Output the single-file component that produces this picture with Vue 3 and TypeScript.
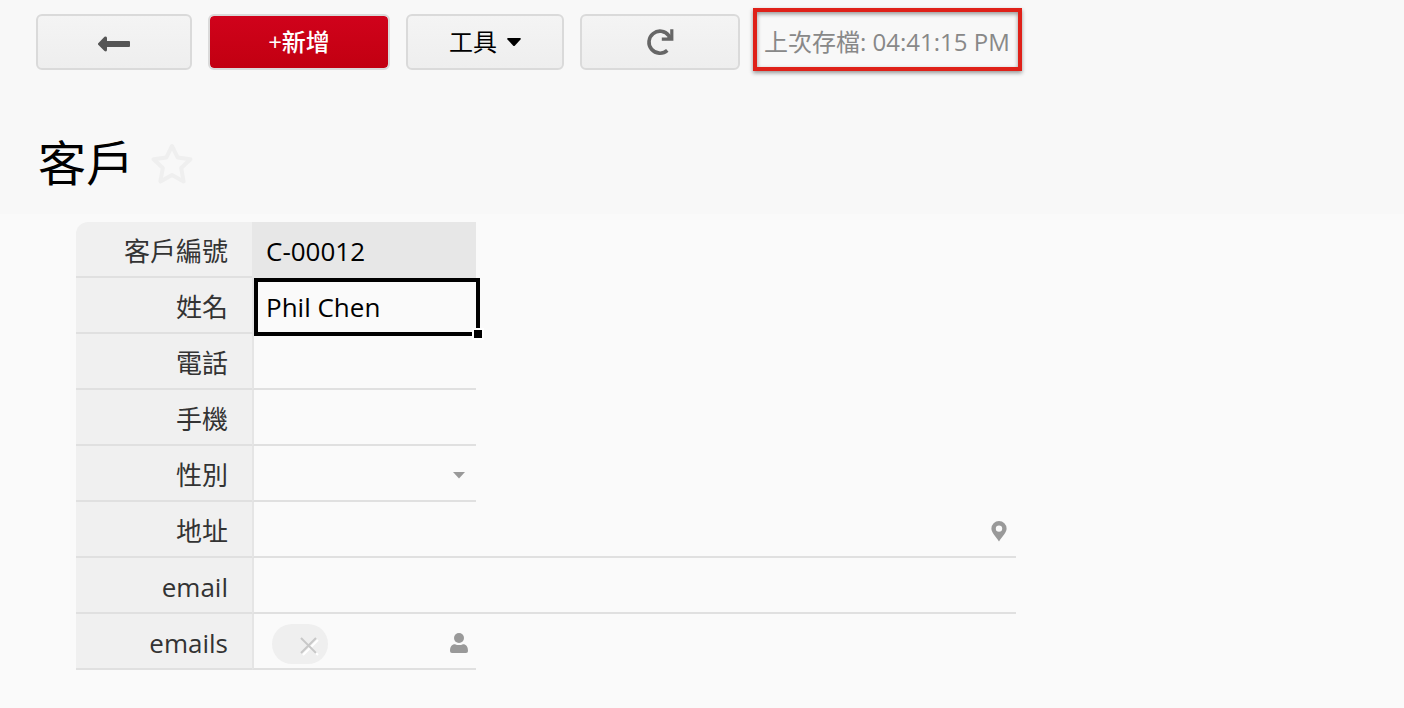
<script setup lang="ts">
import { ref } from 'vue'

interface Field {
  id: string
  label: string
  value: string
  kind: 'locked' | 'text' | 'select' | 'place' | 'people'
  wide?: boolean
  active?: boolean
}

const fields = ref<Field[]>([
  { id: 'number', label: '客戶編號', value: 'C-00012', kind: 'locked' },
  { id: 'name', label: '姓名', value: 'Phil Chen', kind: 'text', active: true },
  { id: 'phone', label: '電話', value: '', kind: 'text' },
  { id: 'mobile', label: '手機', value: '', kind: 'text' },
  { id: 'gender', label: '性別', value: '', kind: 'select' },
  { id: 'address', label: '地址', value: '', kind: 'place', wide: true },
  { id: 'email', label: 'email', value: '', kind: 'text', wide: true },
  { id: 'emails', label: 'emails', value: '', kind: 'people' },
])
const savedAt = ref('04:41:15 PM')
</script>

<template>
  <div class="page">
    <header class="header">
      <div class="toolbar">
        <div class="buttons">
          <button type="button" class="btn back" aria-label="返回">
            <svg width="32" height="16" viewBox="0 0 32 16">
              <path d="M0 7.5 L6.5 .8 Q9 -.4 9 2.2 V5 H31 Q32 5 32 6 V10 Q32 11 31 11 H9 V13.5 Q9 16.3 6.5 15 L0 8.6 Z" fill="#555" />
            </svg>
          </button>
          <button type="button" class="btn primary">+新增</button>
          <button type="button" class="btn tools">
            工具
            <svg width="14" height="8" viewBox="0 0 14 8">
              <path d="M1 0 H13 Q14.3 .2 13.5 1.4 L8 7.4 Q7 8.4 6 7.4 L.5 1.4 Q-.3 .2 1 0 Z" fill="#000" />
            </svg>
          </button>
          <button type="button" class="btn reload" aria-label="重新整理">
            <svg width="28" height="28" viewBox="0 0 28 28">
              <path d="M21.3 22.4 A11 11 0 1 1 22.8 7.6 L24.5 10" fill="none" stroke="#666" stroke-width="3.6" />
              <path d="M24.2 1.2 H27.4 V12.7 H15.8 V9.5 H21 L24.2 7.5 Z" fill="#666" />
            </svg>
          </button>
        </div>
        <p class="saved">上次存檔: {{ savedAt }}</p>
      </div>
      <div class="heading">
        <h1>客戶</h1>
        <button type="button" class="star" aria-label="加入最愛">
          <svg width="42" height="42" viewBox="0 0 42 42">
            <path d="M21 3 L26.6 14.4 L39.4 16.2 L30.2 25 L32.6 38.4 L21 32 L9.4 38.4 L11.8 25 L2.6 16.2 L15.4 14.4 Z" fill="none" stroke="#efefef" stroke-width="4" stroke-linejoin="round" />
          </svg>
        </button>
      </div>
    </header>

    <form class="form" @submit.prevent>
      <div v-for="f in fields" :key="f.id" class="row" :class="[f.kind, { wide: f.wide, active: f.active }]">
        <label :for="f.id">{{ f.label }}</label>
        <div class="cell">
          <select v-if="f.kind === 'select'" :id="f.id" v-model="f.value">
            <option value=""></option>
            <option value="m">男</option>
            <option value="f">女</option>
          </select>
          <template v-else-if="f.kind === 'people'">
            <span class="chip">
              <button type="button" aria-label="移除">
                <svg width="20" height="20" viewBox="0 0 20 20" fill="none" stroke-width="2">
                  <path d="M4 4 L19 19 M19 4 L4 19" stroke="#fff" />
                  <path d="M2 2 L17 17 M17 2 L2 17" stroke="#c8c8c8" />
                </svg>
              </button>
            </span>
            <input :id="f.id" v-model="f.value" type="text" />
          </template>
          <input v-else :id="f.id" v-model="f.value" type="text" :readonly="f.kind === 'locked'" />

          <svg v-if="f.kind === 'select'" class="icon" width="18" height="8" viewBox="0 0 18 8">
            <path d="M3 1 H15 L9 7.6 Z" fill="#999" />
          </svg>
          <svg v-if="f.kind === 'place'" class="icon" width="18" height="22" viewBox="0 0 18 22">
            <path fill-rule="evenodd" d="M9 1 A7.6 7.6 0 0 1 16.6 8.6 C16.6 12.5 13 15.5 9 21.6 C5 15.5 1.4 12.5 1.4 8.6 A7.6 7.6 0 0 1 9 1 Z M9 5.4 A3.2 3.2 0 1 0 9 11.8 A3.2 3.2 0 1 0 9 5.4 Z" fill="#999" />
          </svg>
          <button v-if="f.kind === 'people'" type="button" class="icon" aria-label="選擇聯絡人">
            <svg width="18" height="22" viewBox="0 0 18 22" fill="#999">
              <circle cx="9" cy="6" r="5" />
              <path d="M0 19 C0 14.5 1.8 12.2 5 12.2 Q9 14 13 12.2 C16.2 12.2 18 14.5 18 19 Q18 21 16 21 H2 Q0 21 0 19 Z" />
            </svg>
          </button>
          <span v-if="f.active" class="handle"></span>
        </div>
      </div>
    </form>
  </div>
</template>

<style>
body {
  background: #fafafa;
}
</style>

<style scoped>
.page {
  min-height: 100vh;
  background: #fafafa;
  color: #000;
  font-family: "Open Sans", "Noto Sans CJK TC", sans-serif;
}
.page *,
.page *::before {
  box-sizing: border-box;
}
button,
input,
select {
  margin: 0;
  padding: 0;
  border: 0;
  background: none;
  color: inherit;
  font: inherit;
  outline: none;
}
svg {
  display: block;
}
.header {
  padding: 8px 36px 18px;
  background: #f8f8f8;
}
.toolbar {
  display: flex;
  align-items: flex-start;
  gap: 13px;
}
.buttons {
  display: flex;
  gap: 16px;
  padding-top: 6px;
}
.btn {
  display: flex;
  align-items: center;
  justify-content: center;
  gap: 10px;
  height: 56px;
  border: 2px solid #dadada;
  border-radius: 6px;
  background: linear-gradient(#f4f4f4, #eee);
  font-size: 24px;
  line-height: 32px;
}
.back {
  width: 156px;
  padding-top: 4px;
}
.primary {
  width: 182px;
  background: linear-gradient(#d0021b, #c20011) padding-box;
  color: #fff;
  font-weight: 500;
}
.tools {
  width: 158px;
}
.reload {
  width: 160px;
}
.saved {
  margin: 0;
  padding: 16px 8px 11px 7px;
  border: 4px solid #df2119;
  color: #888;
  font-size: 24px;
  line-height: 28px;
  white-space: nowrap;
  box-shadow: 0 2px 4px rgba(0, 0, 0, 0.4), inset 0 2px 4px rgba(0, 0, 0, 0.4);
}
.heading {
  display: flex;
  align-items: center;
  gap: 17px;
  margin-top: 59px;
}
h1 {
  margin: 0;
  padding-left: 2px;
  font-size: 48px;
  font-weight: 400;
  line-height: 66px;
}
.star {
  padding-top: 2px;
}
.form {
  max-width: 1016px;
  padding: 8px 0 38px 76px;
}
.row {
  display: flex;
  max-width: 400px;
  height: 56px;
  font-size: 26px;
  line-height: 36px;
}
.row.wide {
  max-width: none;
}
label {
  display: flex;
  flex: none;
  align-items: center;
  justify-content: flex-end;
  width: 176px;
  padding: 3px 24px 0 0;
  border-bottom: 2px solid #e0e0e0;
  background: #f0f0f0;
  color: #333;
}
.row:first-child label {
  border-top-left-radius: 12px;
}
.cell {
  position: relative;
  display: flex;
  flex: 1;
  align-items: center;
  min-width: 0;
  padding: 3px 8px 0 12px;
  border-bottom: 2px solid #e0e0e0;
  border-left: 2px solid #e5e5e5;
}
.cell input,
.cell select {
  flex: 1;
  min-width: 0;
  height: 36px;
  appearance: none;
}
.locked .cell {
  border-color: #e7e7e7;
  background: #e7e7e7;
}
.icon {
  flex: none;
}
.active .cell::before {
  content: "";
  position: absolute;
  inset: 0 -4px -4px 0;
  border: 4px solid #000;
  pointer-events: none;
}
.handle {
  position: absolute;
  right: -8px;
  bottom: -8px;
  width: 12px;
  height: 12px;
  border: 2px solid #fff;
  background: #000;
}
.people .cell {
  padding-left: 18px;
}
.chip {
  display: flex;
  align-items: center;
  justify-content: flex-end;
  width: 56px;
  height: 40px;
  margin-top: 3px;
  padding: 4px 9px 0 0;
  border-radius: 20px;
  background: #efefef;
}
</style>
